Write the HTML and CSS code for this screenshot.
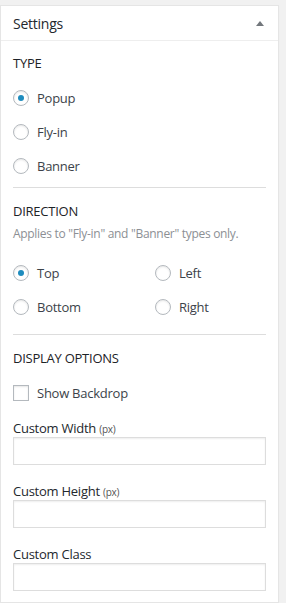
FILE: index.html
```html
<!DOCTYPE html>
<html lang="en">
<head>
<meta charset="UTF-8" />
<meta name="viewport" content="width=device-width, initial-scale=1" />
<title>Settings</title>
<link rel="stylesheet" href="styles.css">
</head>
<body>

<div class="postbox">
  <div class="hndle">
    <span>Settings</span>
    <span class="toggle"></span>
  </div>
  <div class="inside">
    <h4 class="section-title">TYPE</h4>
    <div class="radio-list">
      <label class="choice"><span class="radio checked"></span>Popup</label>
      <label class="choice"><span class="radio"></span>Fly-in</label>
      <label class="choice"><span class="radio"></span>Banner</label>
    </div>

    <hr class="divider" />

    <h4 class="section-title dir-title">DIRECTION</h4>
    <p class="description">Applies to "Fly-in" and "Banner" types only.</p>
    <div class="radio-grid">
      <label class="choice"><span class="radio checked"></span>Top</label>
      <label class="choice"><span class="radio"></span>Left</label>
      <label class="choice"><span class="radio"></span>Bottom</label>
      <label class="choice"><span class="radio"></span>Right</label>
    </div>

    <hr class="divider divider-2" />

    <h4 class="section-title dir-title">DISPLAY OPTIONS</h4>
    <label class="choice check-row"><span class="checkbox"></span>Show Backdrop</label>

    <div class="field">
      <label class="field-label">Custom Width <small>(px)</small></label>
      <input type="text" class="text-input" />
    </div>
    <div class="field">
      <label class="field-label">Custom Height <small>(px)</small></label>
      <input type="text" class="text-input" />
    </div>
    <div class="field">
      <label class="field-label">Custom Class</label>
      <input type="text" class="text-input" />
    </div>
  </div>
</div>

</body>
</html>
```

FILE: styles.css
```css
body {
  margin: 0;
  background: #f1f1f1;
  font-family: "Open Sans", "Noto Sans", sans-serif;
  font-size: 13px;
  letter-spacing: -0.25px;
  color: #32373c;
}
.postbox {
  width: 277px;
  margin-top: 5px;
  background: #fff;
  border: 1px solid #e5e5e5;
  box-shadow: 0 1px 1px rgba(0,0,0,0.04);
}
.hndle {
  height: 34px;
  padding: 0 12px;
  display: flex;
  align-items: center;
  justify-content: space-between;
  border-bottom: 1px solid #eee;
  font-size: 14px;
  color: #23282d;
}
.toggle {
  width: 0;
  height: 0;
  margin-right: 2px;
  border-left: 4px solid transparent;
  border-right: 4px solid transparent;
  border-bottom: 5px solid #72777c;
}
.inside {
  padding: 12px 12px 11px;
}
.section-title {
  margin: 0;
  height: 20px;
  line-height: 20px;
  font-size: 13px;
  font-weight: normal;
  color: #1d2327;
}
.radio-list {
  margin-top: 8px;
}
.choice {
  display: flex;
  align-items: center;
  height: 34px;
  color: #3c434a;
}
.radio {
  box-sizing: border-box;
  flex: none;
  width: 16px;
  height: 16px;
  margin-right: 8px;
  border: 1px solid #b4b9be;
  border-radius: 50%;
  box-shadow: inset 0 1px 2px rgba(0,0,0,0.1);
  display: flex;
  align-items: center;
  justify-content: center;
}
.radio.checked::after {
  content: "";
  width: 6px;
  height: 6px;
  border-radius: 50%;
  background: #1e8cbe;
}
.divider {
  margin: 4px 0 0;
  border: 0;
  border-top: 1px solid #ddd;
}
.dir-title {
  margin-top: 13px;
}
.description {
  margin: 4px 0 0;
  line-height: 18px;
  font-size: 12px;
  letter-spacing: -0.3px;
  color: #8c8f94;
}
.radio-grid {
  margin-top: 13px;
  display: grid;
  grid-template-columns: 142px 1fr;
}
.divider-2 {
  margin-top: 10px;
}
.check-row {
  margin-top: 8px;
}
.checkbox {
  box-sizing: border-box;
  flex: none;
  width: 16px;
  height: 16px;
  margin-right: 8px;
  border: 1px solid #b4b9be;
  box-shadow: inset 0 1px 2px rgba(0,0,0,0.1);
}
.field {
  margin-top: 9px;
}
.field + .field {
  margin-top: 17px;
}
.field-label {
  display: block;
  height: 18px;
  line-height: 18px;
  color: #23282d;
  font-size: 13px;
}
.field-label small {
  font-size: 10px;
  color: #555;
}
.text-input {
  display: block;
  box-sizing: border-box;
  width: 100%;
  height: 28px;
  margin: 0;
  border: 1px solid #ddd;
  box-shadow: inset 0 1px 2px rgba(0,0,0,0.07);
  background: #fff;
}
```
